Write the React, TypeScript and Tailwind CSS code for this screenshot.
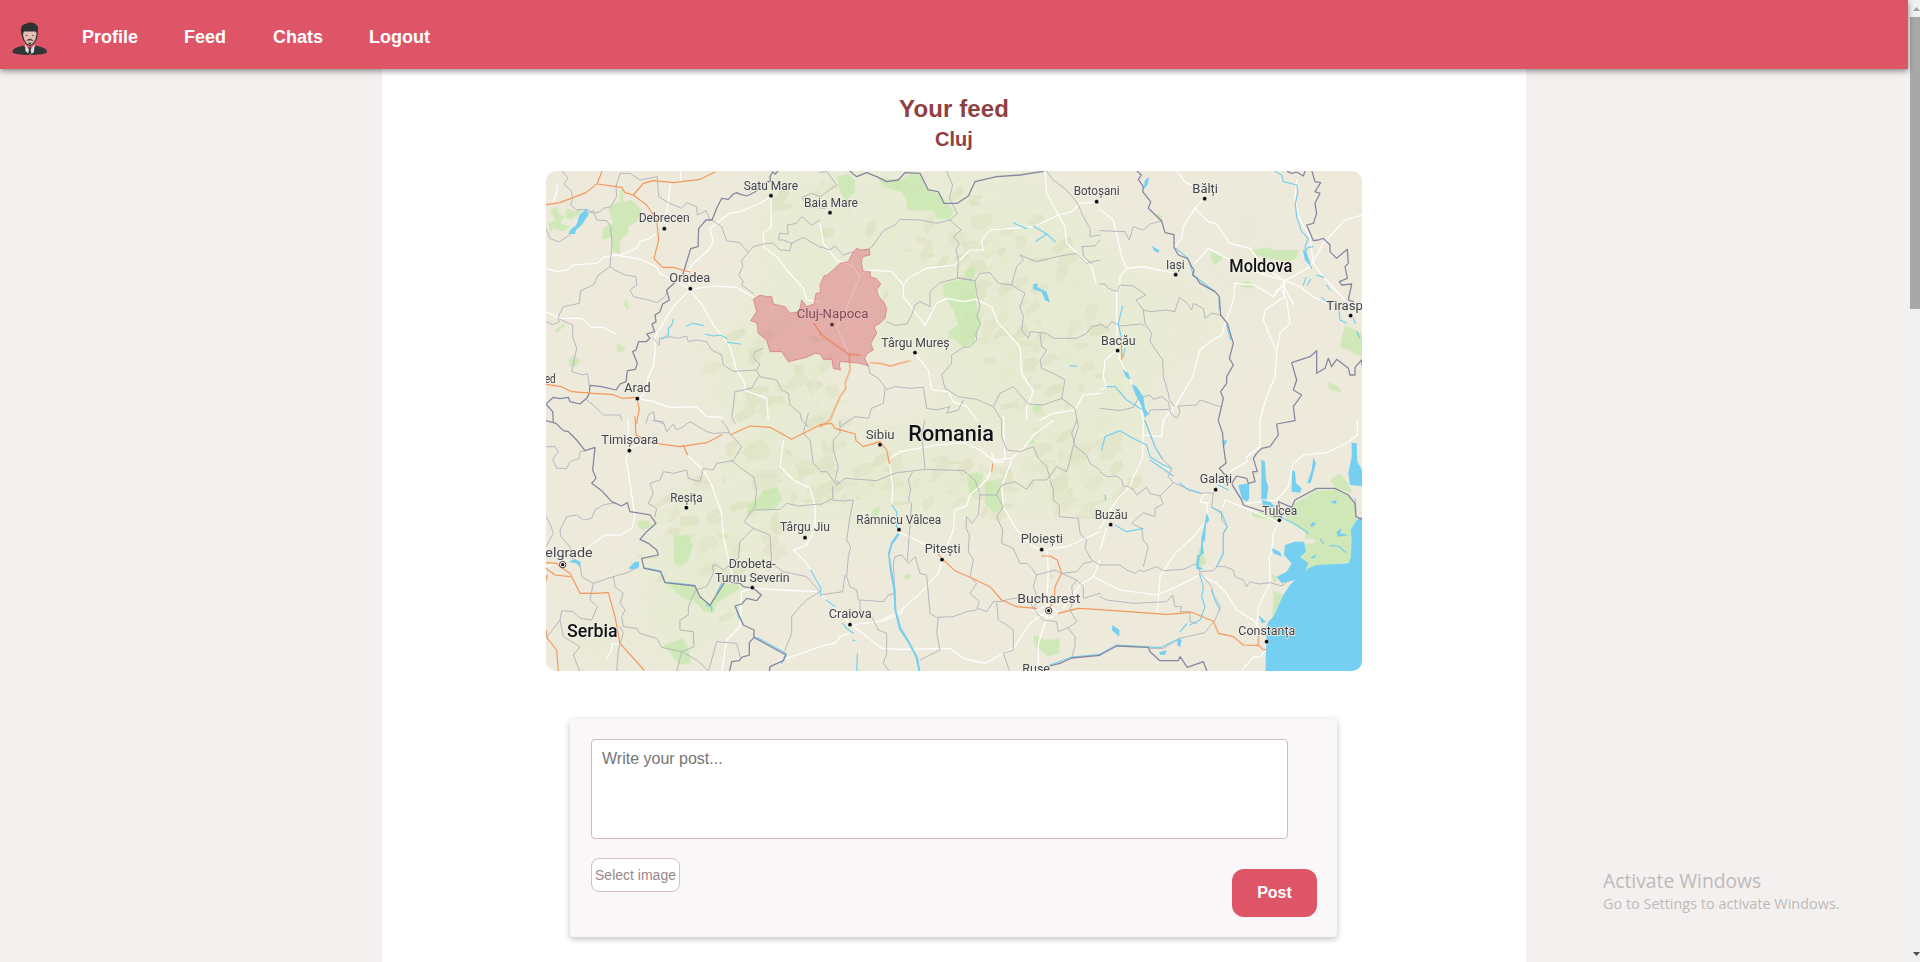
import React from "react";

type Sheet = {
  x: number;
  y: number;
  border: string[];
  county: string[];
  road: string[];
  motorway: string[];
  park: string[];
  lake: string[];
  river: string[];
};

/* Every sheet of the map is drawn at three units per pixel. */
const sheets: Sheet[] = [
  {
    x: -6,
    y: -11,
    border: [
      "714,34 706,42 698,36 690,50 692,62 668,74 645,96 620,108 604,104 590,98 580,102 565,118 545,115 530,145 516,180 498,180 476,206 474,260 452,266 428,345 404,368 380,390 388,420 368,432 360,455 345,465 348,485 336,492 344,515 320,522 330,535 318,545 296,545 288,570 278,575 292,610 286,628 262,632 258,665 240,672 228,690 185,680 150,676 148,700 140,715 120,732 90,725 85,712 60,716 40,712 18,732 38,755 40,786",
    ],
    county: [
      "68,34 84,55 72,72 94,92 98,118 92,135 110,150 140,148 160,160 180,155 190,145 212,140 230,110 228,80 240,40 270,40 300,60 352,50 356,110 385,128 425,145 440,128 470,140 472,165 498,152 510,180",
      "18,205 30,235 56,246 90,225 130,165 160,152 170,180 200,182 212,200 216,250 210,320 175,345 160,375 122,392 118,430 70,440 55,470 58,485 38,494 18,485",
      "210,320 225,330 255,345 288,350 290,375 270,390 280,410 325,420 350,428 375,410 380,398",
      "60,478 98,495 98,530 110,565 95,635 130,645 142,640 148,676",
      "516,180 545,200 560,242 600,248 625,278 605,300 608,320 596,345 610,365 605,375 640,400",
      "625,278 640,260 680,250 700,250 720,270 750,272 755,250 730,240 716,240 718,220 745,222 742,195 770,190 785,170 815,195 840,180",
      "755,250 790,232 840,262",
      "855,145 805,140 785,112 815,100 840,110",
      "340,535 358,556 358,535 390,530 415,535 440,528 445,545 470,540 500,545 515,570 545,585 550,615 580,634 650,630 660,612 645,600 640,590 645,575 670,565",
      "650,632 660,650 710,660 725,690 745,700 750,735 780,760 785,780 805,800",
      "655,650 635,685 610,690 585,695 580,740 575,770 585,790",
      "140,720 160,735 190,765 240,765 245,780",
      "318,790 325,765 340,755 345,780 370,792",
    ],
    road: [
      "52,72 50,100 38,130",
      "422,34 422,62",
      "392,68 385,120 375,190",
      "345,222 330,235 300,245 290,265 240,285 195,290 170,310 100,315 80,330 50,335 18,326",
      "220,283 300,298 350,320 360,340 440,380 450,388",
      "693,110 660,130 600,155 570,160 510,205 520,245 505,270 455,315 440,345 450,380",
      "693,110 694,200 670,220 672,262 715,295 740,330 790,385 800,420 840,425",
      "450,388 520,378 590,382 640,412",
      "450,388 400,440 345,530 345,580 340,620 325,650 318,695 300,712",
      "450,390 490,440 520,495 570,560 590,630 615,670 612,690 680,715 685,780",
      "18,455 60,475 125,475 155,502 190,502 226,521",
      "292,716 340,724 390,742 470,740 500,770 545,772",
    ],
    motorway: [
      "18,134 60,128 138,98 172,70 186,34",
      "172,72 245,82 255,98 280,105 320,135 350,180 356,240 342,295 368,322 400,322 450,336",
      "280,105 310,70 340,62 400,68 480,58 525,36",
      "18,673 65,680 95,695 160,700 220,704 245,715 290,712",
      "290,716 298,745 290,790",
      "822,490 842,520",
    ],
    park: [
      "210,135 240,125 240,90 250,90 250,125 275,120 305,150 290,185 265,200 265,215 240,245 240,282 218,275 215,230 185,240 190,205 220,190 205,150",
      "30,150 50,140 60,165 75,170 60,190 90,200 70,215 40,205 30,220 25,190 45,180",
      "80,145 105,155 125,140 120,160 90,180 76,170",
      "45,510 75,488 75,497 50,518",
      "232,550 258,565 245,580 230,572",
      "85,600 100,585 120,600 108,620 90,620",
      "250,430 262,415 262,430 270,447 258,445",
    ],
    lake: ["140,145 145,165 125,195 108,210 105,222 85,222 92,208 110,195 118,165"],
    river: [
      "400,478 395,495 385,505 385,525 365,538",
      "440,498 460,490 490,497",
      "495,522 520,528 540,525 560,535",
      "562,547 602,552",
    ],
  },
  {
    x: 274,
    y: -11,
    border: [
      "90,34 110,50 140,38 170,50 200,65 235,60 255,38 300,40 325,90 355,95 372,130 412,130 445,108 465,65 530,50 600,45 670,34",
    ],
    county: [
      "0,38 20,34 50,75 0,110",
      "380,34 398,75 388,115 412,160 390,180 424,210 400,230 418,250 408,270 415,300 412,352 455,360",
      "390,180 350,190 300,180 240,178 225,195 190,212 155,262 135,270",
      "0,260 30,270 45,258 70,285 100,275",
      "200,485 225,496 260,492 275,465 285,435 300,425 330,440 330,395 360,368 412,355 465,362 480,340 510,338 535,370 575,375 590,320 610,300 600,285 650,305 710,290 770,280 800,310 840,300",
      "465,362 470,400 480,440 470,470 482,490 468,520 470,540 450,560 430,562 395,585 395,610 365,645 375,685 415,710 470,718 520,740 540,700 580,680 625,732 670,735 725,715",
      "575,375 615,400 600,440 610,470 605,510 625,535 630,515 680,520 700,535 770,535 800,520 815,500 840,495",
      "660,520 665,560 680,570 660,600 665,625 700,640 735,660 725,715 765,745 775,800 760,850",
      "145,615 150,640 175,655 200,688 225,680 270,685 310,682 320,745 350,750 390,740 380,760 415,750 430,720",
      "680,34 700,60 740,90 765,120 775,135 790,170 810,205 810,230 840,225",
      "195,688 190,730 155,745 145,775 105,770 60,800",
      "785,260 825,258 840,240",
      "788,262 790,290 815,310",
      "520,740 545,780",
    ],
    road: [
      "0,190 10,250 50,300 100,320 120,350 90,420 50,500 85,580",
      "125,340 150,330 215,335 250,375 250,410 315,495 350,430 380,415 430,425 465,418 515,440 535,490 555,510 600,560 605,640 640,695 620,740 620,780",
      "250,375 270,350 320,325 405,315 450,270 490,270 485,240 510,210 575,205 640,200 715,165 755,155 780,130 840,125",
      "675,34 680,100 715,165 735,200 740,250 815,320 828,370",
      "285,580 325,630 335,690 385,695 400,725 440,740 470,780",
      "660,780 700,760 765,750 790,705 840,700",
    ],
    motorway: ["0,520 40,550 85,582 120,586", "88,582 90,630 75,670 78,685 60,710 30,780 0,800", "150,608 180,610 210,618 270,602"],
    park: [
      "50,50 85,42 105,60 105,95 85,115 80,140 60,90",
      "170,50 235,62 275,40 300,45 330,95 360,100 400,150 390,178 350,175 340,150 260,150 260,120 240,95 190,80",
      "370,370 412,360 465,362 470,440 482,490 460,550 430,562 400,535 385,535 385,515 415,495 400,450 370,400",
      "435,330 468,320 455,360 435,350",
      "640,735 664,735 664,758 636,750",
    ],
    lake: ["640,372 652,370 652,382 680,395 690,428 675,420 665,395 640,388"],
    river: ["580,188 605,200 620,205", "640,198 680,222 648,244", "680,222 706,245", "750,617 770,619"],
  },
  {
    x: 554,
    y: -11,
    border: [
      "112,34 124,45 115,58 130,80 128,95 152,125 145,145 185,183 195,218 222,224 222,262 235,285 262,295 275,320 282,330 278,345 290,355 300,370 345,395 358,410 362,465 382,490 400,550 388,595 400,615 380,650 380,670 362,695 370,715 355,780",
      "562,34 575,40 590,36 610,48 615,34",
      "636,34 645,65 662,68 645,95 660,100 645,130 650,160 640,190 620,195 635,230 640,242 655,240 670,235 690,255 690,275 710,295 742,268 745,310 735,320 742,355 718,365 725,375 755,372 745,420 760,425",
      "786,615 785,600 765,622 765,645 750,645 745,625 710,598 695,620 685,595 675,625 650,640 650,572 630,590 575,608 590,660 580,690 605,705 580,740 585,780",
    ],
    county: [
      "0,212 75,215 88,240 100,200 130,210 150,192 185,183",
      "0,372 15,372 25,385 50,395 60,375 100,378 138,405 108,420 130,450 150,455 200,450 225,455 238,412 262,430 275,450 280,430 310,445 315,475 335,460 362,465",
      "130,450 135,490 155,520 150,545 188,600 190,650 205,700 208,720 225,740",
      "0,490 20,505 35,485 60,498 125,492 135,500",
      "0,745 60,752 100,742 115,715 150,705 160,718 185,710 205,725 212,760 230,775 240,755 235,738 290,735 300,720 362,740",
      "145,765 150,750 205,748",
    ],
    road: [
      "0,148 40,180 55,245 65,290 80,325 60,350 60,380 50,390 50,500 52,570",
      "80,325 130,320 225,340",
      "230,34 260,70 310,85 312,115 285,145 250,200 245,235 225,260",
      "285,145 325,185 350,192 390,250 450,265 490,320 555,362",
      "285,310 325,265 390,300 480,340 555,362 630,320 670,250 735,180 786,165",
      "555,362 520,410 465,375 405,370 400,420 375,490 365,525 330,545 300,570 278,650 225,740 190,780",
      "553,365 553,410 495,450 490,480 530,575 540,520 570,490 560,420 545,390",
      "525,395 550,380 580,432",
      "530,580 525,650 500,710 480,780",
      "555,362 600,380 640,410 680,430",
      "590,60 585,120 600,180 630,230 640,310 665,345 735,420",
      "52,570 60,600 110,700 130,780",
      "50,572 15,600 10,650 20,680 0,690",
    ],
    motorway: ["64,550 66,598"],
    park: [
      "455,270 500,262 525,270 545,270 570,270 595,268 590,295 560,305 500,295 470,285",
      "330,275 365,285 370,292 345,315 335,300",
      "415,370 445,362 462,385 430,382",
      "720,560 735,495 786,520 786,590",
      "680,665 715,680 725,698 690,690",
      "165,160 185,165 185,183 170,175",
    ],
    lake: [
      "156,258 180,272 172,278 160,270",
      "135,60 148,52 142,75 130,90",
      "68,628 85,640 92,660 78,652",
      "95,672 110,680 130,710 135,745 145,760 135,775 125,740 105,700",
      "608,268 620,280 630,315 615,300",
    ],
    river: [
      "525,34 545,45 550,65 590,75 594,95 586,130 590,170 605,215 625,235 615,260 620,285 635,325",
      "640,260 625,262 612,275 625,310",
      "610,375 618,352",
      "622,375 632,358",
      "650,345 672,352",
      "680,375 690,390",
      "665,412 685,430",
      "715,430 720,480 740,490",
      "68,438 60,470 55,490 65,540",
      "75,565 70,590",
      "760,475 766,490",
      "770,515 780,535",
      "20,680 45,680 80,720 125,748",
      "228,265 265,296 280,345 345,395",
      "357,415 358,450",
      "380,495 392,540",
    ],
  },
  {
    x: -6,
    y: 249,
    border: [
      "18,2 48,10 70,32 85,35 95,45 110,60 135,92 165,82 158,150 168,175 155,190 185,212 215,245 245,258 262,248 270,275 330,285 348,310 320,335 300,358 325,370 350,390 355,405 305,415 312,445 362,455 375,488 465,498 480,530 510,556 555,485 600,490 610,500 640,505 664,525 650,542 620,535 605,552 585,558 610,615 642,630 642,652 738,705 730,722 690,740 688,756",
      "642,652 628,668 628,705 605,712 598,722 575,725 568,756",
    ],
    county: [
      "18,80 45,80 55,95 38,118 50,145 80,145 90,125 118,115 120,95 135,92",
      "225,248 190,255 165,270 155,295 130,300 110,285 80,290 60,330 62,350 90,380 90,410 120,430 125,470 160,490 220,470 262,458 295,440",
      "338,2 370,5 380,35 400,12 410,30 430,20 450,5 500,35 520,40 568,38 605,80 580,122 530,130 520,150 490,145 480,185 445,175 440,150 400,160 370,155 360,180 330,190 340,220 325,250 350,265 345,290",
      "545,2 560,20 568,38",
      "575,122 610,150 640,170 650,210 645,260 612,305 640,325 600,365 595,415 550,450 530,435 518,435 520,460 500,500 465,510",
      "645,270 720,268 740,250 775,258 840,252",
      "640,325 690,345 695,430 730,455 800,470 840,515",
      "465,515 445,560 445,585 420,600 420,630 460,635 462,680 425,695 365,682 350,655 300,640 290,625 250,620 245,590 255,570 240,550 250,520 225,500 220,470",
      "160,490 150,540 172,560 155,600 120,595 100,575 65,572 60,600 18,655",
      "60,600 70,650 120,680 100,705 120,756",
      "425,695 410,756",
      "425,695 470,720 510,756",
      "505,756 530,665 590,670 600,710",
      "18,290 30,310 40,340 18,380",
      "840,515 800,540 780,560 755,590 755,640 735,690",
      "240,620 250,640 235,690 230,756",
      "805,-20 790,40 810,60 820,130 840,150",
    ],
    road: [
      "268,95 258,115 270,190 285,290 275,325 240,345 195,345 140,385 120,410",
      "265,2 265,60",
      "350,72 292,75 270,88",
      "445,108 490,150 515,195 545,280 550,350 570,440 580,480",
      "640,505 605,515 600,620 560,660 555,690 545,756",
      "730,62 720,140 760,180 810,205 825,255 825,330 800,375 760,390 800,430 840,500",
      "640,505 760,512 830,515",
      "715,722 770,705 840,680",
      "200,715 215,690 215,672 245,672",
      "20,440 45,432 67,434",
    ],
    motorway: [
      "285,-10 288,45 330,68 420,80 500,68 545,45",
      "430,76 442,104",
      "572,44 630,18 690,22 755,58 780,45 840,15",
      "18,428 50,430 60,440 90,460 120,520 165,520 205,518 225,590 240,670 312,750",
      "18,445 45,465 90,470",
      "18,630 22,655 50,690 55,756",
      "18,482 22,465",
    ],
    park: [
      "400,345 445,345 460,375 445,420 425,436 402,430",
      "290,305 325,302 335,318 310,330 295,322",
      "620,290 625,250 650,240 665,212 715,202 725,240 700,270 650,272",
      "380,490 465,502 485,540 510,555 545,495 590,490 600,505 560,530 530,550 520,580 490,572 460,540 430,535",
      "370,675 430,655 445,690 455,730 420,735 390,700",
    ],
    lake: ["265,445 285,425 298,425 295,445 275,448", "85,425 105,418 122,425 118,440 108,430"],
    river: [
      "312,443 362,453 375,486 465,496",
      "500,555 515,560 515,572",
      "588,560 595,590 610,612",
      "545,490 530,520",
      "650,652 738,700 725,730",
      "812,450 840,500",
    ],
  },
  {
    x: 274,
    y: 249,
    border: ["690,738 720,730 755,714 840,706"],
    county: [
      "0,155 20,155 50,195 75,175 170,182 230,158 320,148 430,152 465,180 480,220 475,285 455,310 440,290 438,325 448,345 445,395 460,420 450,470 470,490 450,520 478,545 470,570 440,575 400,590 350,592 330,580 320,465 300,460 285,410 265,430 245,405 225,410 220,430 225,520 205,525 190,545 120,540 120,570",
      "38,200 38,235 0,255",
      "38,240 70,243 100,240 90,290 80,360 92,380 85,410 80,470 90,500 110,510 115,540",
      "75,465 68,515 0,525",
      "315,2 305,40 315,145",
      "278,155 265,180 272,210 265,240 275,250 262,420",
      "120,570 155,590 175,630 200,640 200,700 190,730 210,756",
      "480,225 530,225 545,195 585,185 620,208 640,180 680,180 710,140 740,155 750,120 760,75 800,105 810,130 840,150",
      "60,2 60,40 40,60 40,90 55,140 45,180 60,190",
      "545,2 545,50 560,90 600,95 640,80 655,115 680,140 690,175",
      "765,75 755,40 770,2",
      "690,180 700,210 700,240 718,255 718,290 775,295 780,340 800,360 795,385 815,420 840,435",
      "815,425 790,430 770,455 725,460 705,450 650,465 635,445 620,430 600,430 580,385 545,370 548,330 530,290 550,260 530,225",
      "650,465 640,500 655,540 640,565 660,590 670,600 710,605 715,635 750,620 770,605 750,570 760,540 755,500 770,480 725,460",
      "540,545 580,535 625,535 640,565",
      "540,545 520,545 500,575 475,565",
      "530,550 535,600 560,615 580,630 580,690 550,700 570,756",
      "355,592 350,640 360,690 300,720",
      "745,625 765,650 765,680 755,712",
      "770,480 790,500 790,535 840,520",
    ],
    road: [
      "210,115 240,95 350,75 430,68",
      "210,135 218,200 215,255",
      "430,68 480,90 520,120 575,115 610,85 640,45 700,2",
      "550,-10 555,115",
      "575,120 545,200 550,260 590,330 640,380 665,390 740,380 840,335",
      "525,125 500,180 450,225 440,258 405,270 400,330 385,370 370,410",
      "515,100 525,125 550,125",
      "235,335 300,365 360,405",
      "368,420 355,460 300,520 240,575 170,605 95,615 20,540 0,520",
      "95,615 185,685 250,688 390,685 430,715 495,730 580,685 630,610 680,575",
      "185,605 245,580 250,560",
      "0,678 45,670 60,650 85,640",
      "680,390 685,450 680,560",
      "685,580 655,670 655,740",
      "730,565 780,495 820,470 840,480",
      "820,470 840,420",
      "650,570 685,555 715,575 690,595 655,580 635,570",
    ],
    motorway: [
      "0,14 35,10 45,25 105,42 108,62 130,80 180,65 200,90 208,130",
      "519,130 515,155",
      "665,408 690,408 712,420 725,460 705,500 703,540 690,560",
      "355,402 370,420 405,452 450,472 510,500 545,540 590,560 650,565",
      "715,580 775,565 840,569",
    ],
    park: [
      "440,170 470,155 490,170 478,210 450,230",
      "495,185 530,180 545,210 545,250 555,265 520,278 495,250",
      "155,270 180,258 175,285 155,292",
      "255,462 272,462 270,478 252,475",
      "640,645 680,660 720,655 718,700 685,708 645,680",
      "622,72 640,58 648,72",
      "688,460 702,470 692,475",
      "105,235 122,228 118,240",
    ],
    lake: [
      "232,340 240,342 217,375 209,405 216,450 227,510 229,570 244,625 269,665 293,710 302,756 296,756 286,710 262,665 237,628 223,570 220,510 209,450 204,400 213,368",
    ],
    river: ["215,255 230,275 230,320 238,335", "68,610 80,625 100,640", "98,660 104,662", "112,700 110,756", "690,735 755,711 840,703", "2,500 2,525", "18,540 45,560"],
  },
  {
    x: 554,
    y: 249,
    border: [
      "355,2 368,40 370,75 378,130 358,145 375,165 395,190 400,200 425,240 430,255 490,275",
      "585,2 530,12 535,45 510,80 485,85 470,100 460,115 472,155 458,155 465,185 445,190 440,175 410,168 395,190",
      "520,288 545,290 535,245 575,262 585,240 650,205 705,205 745,225 765,250 768,290 786,298",
      "0,705 50,678 145,682 150,695 180,722 235,722 240,710 262,742 310,725 322,756",
    ],
    county: [
      "0,155 20,170 50,168 65,180 70,198 85,200 100,208 110,225 140,202 150,220 180,228 220,188 260,205 300,220 340,218",
      "180,228 190,252 165,265 165,290 130,278 95,310 125,325 130,360 145,380 130,440",
      "0,435 60,435 80,450 105,460 120,450 130,455 170,440 190,452 250,448 290,430 300,455",
      "135,2 165,80 190,120 215,145 205,170 220,188",
      "340,218 335,262 365,275 365,300 382,320 370,340 370,400 350,440 340,452 300,455",
      "300,460 335,500 340,525 362,560 345,600 315,638 240,655 190,685 150,685",
      "350,440 375,440 400,450 405,470 430,480 440,500 450,485 475,492 510,488 545,498 575,475 590,482",
      "0,530 20,540 60,545 100,550 200,545 218,525 225,560 245,560 240,575 270,575 270,605 290,610",
    ],
    road: [
      "130,2 128,115 100,170 90,200 50,240 20,290 0,325",
      "20,325 0,390",
      "190,2 185,50 135,45",
      "325,250 300,245 310,225 350,210",
      "322,255 320,300 280,350 225,400 180,470 172,575",
      "0,480 60,510 172,525 240,495 300,465 350,490 380,520 410,570 460,600 490,640",
      "370,260 375,240 430,262 520,300 535,310 520,340 515,400 508,410 510,490 475,560 470,630",
      "480,2 480,80 440,110 440,125 390,155",
      "440,250 530,240 565,200 580,130 610,105 680,98 740,70 772,45 772,2",
      "498,690 480,710 460,712 425,752",
    ],
    motorway: ["0,569 200,583 275,577 340,604 355,640 400,650 430,675 475,676 488,688 498,689", "475,645 475,676"],
    park: [
      "585,250 650,210 705,208 745,225 765,250 770,300 755,330 755,425 650,440 590,478 570,400 615,370 645,370 645,358 615,355 615,335 560,300 560,270",
      "455,275 530,285 530,305 460,290",
      "690,180 720,160 745,190 760,220 710,205",
      "300,380 320,430 295,445 288,420",
      "520,510 555,528 515,600 520,550",
      "515,460 535,475 520,490",
    ],
    lake: [
      "786,290 770,300 752,330 755,360 752,415 745,430 650,435 625,445 590,475 570,495 550,525 520,590 505,605 497,625 500,660 498,700 496,756 790,756",
      "555,375 585,365 612,365 618,395 600,410 625,430 615,455 585,480 545,490 530,470 560,455 575,430 552,405",
      "484,118 495,125 498,180 505,200 500,238 484,238",
      "415,195 447,190 448,235 440,245 425,235",
      "576,150 585,155 588,190 605,205 600,218 575,215",
      "640,112 648,130 632,190 622,188 635,150",
      "755,68 770,70 772,125 786,150 786,198 750,195 745,160 755,110",
      "485,240 510,245 525,260 490,262",
      "368,60 382,62 372,80",
      "515,385 540,395 545,410 520,400",
      "38,615 58,630 58,650 35,630",
      "232,655 245,660 240,682 232,675",
      "475,585 498,605 485,610",
      "320,278 328,300 318,312 315,360 308,370 312,400 300,408 305,350 312,320",
      "292,405 300,405 296,440 310,445 300,450 288,445",
      "178,697 200,690 195,705 180,704",
      "630,315 640,305 648,312 635,322",
      "710,335 725,325 720,340 748,345 712,350",
      "690,245 710,240 708,253",
      "630,415 648,402 645,415",
    ],
    river: [
      "5,90 15,50 60,32 90,50 140,75 150,110 190,135 215,145",
      "135,2 165,80 185,115",
      "150,120 220,168",
      "240,190 265,210 300,218",
      "355,195 385,210",
      "335,262 365,280 382,320 370,340 370,400 350,440",
      "298,460 310,500 305,530 315,560 300,600 270,615",
      "260,612 240,635",
      "335,510 345,540 360,570",
      "45,315 80,335 130,325",
      "540,290 590,315 625,340",
      "400,200 425,240",
      "765,235 768,270",
      "0,702 50,675 180,683 240,655",
      "690,377 715,378 738,398",
      "662,358 670,370",
      "15,225 17,240",
    ],
  },
];

/* [text, sheet, left, right, baseline, marker x, marker y, marker kind] */
type Label = [string, number, number, number, number, number?, number?, ("dot" | "capital")?];

const labels: Label[] = [
  ["Debrecen", 0, 296, 449, 187, 373, 206],
  ["Satu Mare", 0, 611, 774, 89, 693, 107],
  ["Baia Mare", 1, -48, 114, 140, 30, 158],
  ["Oradea", 0, 388, 511, 367, 451, 386],
  ["Cluj-Napoca", 1, -70, 145, 474, 36, 494],
  ["Târgu Mureș", 1, 184, 389, 561, 285, 578],
  ["Botoșani", 1, 761, 899, 106, 830, 125],
  ["Bălți", 2, 277, 354, 99, 314, 116],
  ["Iași", 2, 198, 254, 328, 227, 344],
  ["Tirasp", 2, 679, 789, 449, 752, 467],
  ["Bacău", 2, 3, 107, 555, 53, 572],
  ["Arad", 0, 253, 332, 697, 292, 716],
  ["ed", 0, 14, 47, 669],
  ["Timișoara", 3, 184, 355, 72, 268, 92],
  ["Reșița", 3, 391, 488, 245, 439, 263],
  ["elgrade", 3, 16, 158, 411, 68, 434, "capital"],
  ["Drobeta-", 3, 566, 707, 444],
  ["Turnu Severin", 3, 525, 749, 486, 637, 503],
  ["Târgu Jiu", 3, 720, 870, 334, 795, 353],
  ["Sibiu", 4, 137, 224, 56, 180, 74],
  ["Râmnicu Vâlcea", 4, 109, 364, 313, 237, 329],
  ["Pitești", 4, 314, 422, 399, 366, 419],
  ["Ploiești", 4, 602, 729, 370, 665, 389],
  ["Craiova", 4, 26, 155, 594, 90, 614],
  ["Bucharest", 4, 592, 781, 548, 686, 572, "capital"],
  ["Ruse", 4, 607, 690, 760],
  ["Buzău", 5, -16, 83, 296, 32, 314],
  ["Galați", 5, 299, 396, 190, 347, 209],
  ["Tulcea", 5, 487, 592, 285, 538, 301],
  ["Constanța", 5, 415, 586, 645, 500, 665],
];

const countries: Label[] = [
  ["Moldova", 2, 388, 577, 337],
  ["Romania", 4, 265, 522, 62],
  ["Serbia", 3, 81, 233, 650],
];

const clujCounty =
  "632,482 650,455 640,418 660,405 680,410 695,410 700,432 735,440 750,460 778,455 785,420 800,440 822,432 828,400 842,398 840,375 852,348 862,345 885,325 900,310 925,305 940,275 952,264 960,270 988,268 990,285 968,290 964,310 970,335 990,335 992,352 1008,355 1022,372 1010,390 1016,410 1030,425 1040,445 1035,475 1020,490 1002,500 1010,520 992,550 1000,570 980,582 974,595 985,618 960,610 900,604 898,618 902,630 880,625 876,598 850,598 840,582 825,580 800,592 745,605 725,575 690,575 680,540 655,520 650,488";

/* Relief zones: centre, radii, number of facets */
const relief: [number, number, number, number, number][] = [
  [330, 45, 110, 40, 34],
  [430, 70, 90, 45, 26],
  [480, 130, 70, 60, 36],
  [520, 230, 60, 90, 50],
  [400, 110, 70, 60, 24],
  [220, 195, 70, 50, 36],
  [245, 250, 60, 40, 28],
  [340, 312, 130, 26, 120],
  [210, 330, 60, 60, 50],
  [540, 305, 50, 50, 45],
  [440, 325, 50, 22, 30],
  [150, 400, 50, 60, 26],
  [150, 350, 50, 45, 20],
  [440, 200, 50, 55, 18],
];

function facets(): [string, string][] {
  let seed = 71;
  const next = () => {
    seed = (seed * 16807) % 2147483647;
    return seed / 2147483647;
  };
  const tints = ["#d9dbb9", "#dfe2c4", "#e1ebc9", "#dcdfbe", "#ebebda", "#e3ebcc"];
  const out: [string, string][] = [];
  for (const [cx, cy, rx, ry, count] of relief) {
    for (let i = 0; i < count; i++) {
      const angle = next() * Math.PI * 2;
      const reach = Math.sqrt(next());
      const x = cx + Math.cos(angle) * rx * reach;
      const y = cy + Math.sin(angle) * ry * reach;
      const w = 3 + next() * 9;
      const h = 2 + next() * 6;
      const s = next() * 7 - 2;
      const k = next() * w;
      out.push([
        `${x - w},${y + s} ${x - k},${y - h} ${x + w * 0.7},${y - h - s} ${x + w},${y - s * 0.5} ${x + k * 0.4},${y + h * 0.7} ${x - w * 0.5},${y + h + s * 0.5}`,
        tints[Math.floor(next() * tints.length)],
      ]);
    }
  }
  return out;
}

const terrain = facets();

function Layer({ name, area, className }: { name: "border" | "county" | "road" | "motorway" | "park" | "lake" | "river"; area?: boolean; className: string }) {
  return (
    <g className={className} strokeLinejoin="round" strokeLinecap="round">
      {sheets.map((s, i) => (
        <g key={i} transform={`translate(${s.x} ${s.y}) scale(0.33333)`}>
          {s[name].map((p, j) => (area ? <polygon key={j} points={p} /> : <polyline key={j} points={p} />))}
        </g>
      ))}
    </g>
  );
}

function MapText({ items, country }: { items: Label[]; country?: boolean }) {
  return (
    <>
      {items.map(([text, sheet, left, right, base, mx, my, kind]) => (
        <g key={text} transform={`translate(${sheets[sheet].x} ${sheets[sheet].y}) scale(0.33333)`}>
          {mx !== undefined && kind !== "capital" && <circle cx={mx} cy={my} r="6.5" fill="#000" stroke="#fff" strokeWidth="1.5" />}
          {mx !== undefined && kind === "capital" && (
            <>
              <circle cx={mx} cy={my} r="9.5" fill="#fff" stroke="#222" strokeWidth="2.5" />
              <circle cx={mx} cy={my} r="5" fill="#111" />
            </>
          )}
          <text
            x={left}
            y={base}
            textLength={right - left}
            lengthAdjust="spacingAndGlyphs"
            fontSize={country ? (text === "Romania" ? 65 : 53) : 39}
            className={
              country
                ? "fill-[#111116] stroke-[#f3f2e8] stroke-[5px] font-medium [paint-order:stroke]"
                : "fill-[#43444c] stroke-[#f1f0e6] stroke-[5px] font-normal [paint-order:stroke]"
            }
          >
            {text}
          </text>
        </g>
      ))}
    </>
  );
}

function CountyMap() {
  return (
    <svg viewBox="0 0 816 500" className="mt-[19px] block h-[500px] w-[816px] shrink-0 rounded-[10px] font-['Roboto',sans-serif]">
      <defs>
        <filter id="soft" x="-30%" y="-30%" width="160%" height="160%">
          <feGaussianBlur stdDeviation="14" />
        </filter>
      </defs>
      <rect width="816" height="500" fill="#edeadc" />
      <g filter="url(#soft)" fill="#e8ebd4">
        <polygon points="215,0 480,0 560,60 620,150 600,260 590,330 520,350 430,350 330,360 230,360 200,460 110,500 90,420 120,330 190,280 150,190 210,120" />
        <ellipse cx="630" cy="150" rx="50" ry="60" opacity="0.6" />
        <ellipse cx="700" cy="80" rx="30" ry="70" opacity="0.25" />
        <ellipse cx="50" cy="470" rx="35" ry="30" opacity="0.8" />
      </g>
      <g fill="#efeadf" filter="url(#soft)" opacity="0.8">
        <ellipse cx="340" cy="215" rx="55" ry="35" />
        <ellipse cx="455" cy="290" rx="26" ry="16" />
      </g>
      <g opacity="0.5">
        {terrain.map(([points, fill], i) => (
          <polygon key={i} points={points} fill={fill} />
        ))}
      </g>
      <Layer name="park" area className="fill-[#c8e8b0] stroke-none opacity-80" />
      <Layer name="road" className="fill-none stroke-white stroke-[3.5px]" />
      <Layer name="county" className="fill-none stroke-[#b3b3bb] stroke-[2.8px]" />
      <Layer name="river" className="fill-none stroke-[#75cff0] stroke-[3.5px]" />
      <Layer name="lake" area className="fill-[#75cff0] stroke-none" />
      <Layer name="border" className="fill-none stroke-[#85869f] stroke-[3.8px]" />
      <Layer name="motorway" className="fill-none stroke-[#f7965a] stroke-[3.5px]" />
      <MapText items={labels} />
      <MapText items={countries} country />
      <g transform="translate(-6 -11) scale(0.33333)">
        <polygon points={clujCounty} fill="#dc5a68" fillOpacity="0.42" stroke="#d9727c" strokeOpacity="0.7" strokeWidth="3" />
      </g>
    </svg>
  );
}

function Avatar() {
  return (
    <svg viewBox="0 0 36 34" className="mt-2 ml-3 h-[34px] w-9">
      <path d="M0.5 30 C0.5 26 5 25.500 11 23.500 L18 29 L24.500 23.500 C30 25.500 35 26 35 30 C35 32 26 33 18 33 C9 33 0.500 32 0.500 30Z" fill="#333536" />
      <path d="M13 22 L17.800 29 L22.500 22 L22 30 L18 33 L13.500 29Z" fill="#d5e3e3" />
      <path d="M16.200 25.500 h3 l-.6 2 1 5 h-3.600 l1 -5Z" fill="#353738" />
      <path d="M10.500 9 h14.500 v6 l-2 5 -3 3.500 h-4.500 l-3 -3.500 -2 -5Z" fill="#e5bfb4" />
      <path d="M10 11 L11.500 17.500 L14.500 22 L17.800 23.500 L21 22 L24 17.500 L25.500 11" fill="none" stroke="#3a3838" strokeWidth="1.300" />
      <path d="M14.800 18.800 C15.500 16.500 20.200 16.500 20.900 18.800 L17.900 17.900Z" fill="#4a4242" stroke="#5a4c4a" strokeWidth="0.600" />
      <path d="M16.300 20.500 h3 l-.6 2 h-1.800Z" fill="#4a4242" />
      <path d="M9.500 12 C8 6 9.500 2 14 2 C17 -0.500 23 0.500 24.500 3 C27 5 26 9 25.300 12 L23.500 9.500 H12 L10.300 14Z" fill="#2f3132" />
      <path d="M14 13.500h1.300M20.300 13.500h1.300" stroke="#3a3030" strokeWidth="1" />
    </svg>
  );
}

export default function App() {
  return (
    <div className="flex h-[962px] w-[1920px] overflow-hidden bg-[#f4f0ef] font-['Liberation_Sans',Arial,sans-serif]">
      <div className="relative flex w-[1908px] flex-col">
        <header className="z-10 flex h-[69px] shrink-0 items-center bg-[#df5568] shadow-[0_2px_6px_rgba(0,0,0,0.45)]">
          <Avatar />
          <nav className="ml-[34px] flex gap-[46px] pt-1.5 text-[18px] font-bold text-white">
            <a>Profile</a>
            <a>Feed</a>
            <a className="ml-px">Chats</a>
            <a>Logout</a>
          </nav>
        </header>
        <main className="mx-auto flex w-[1144px] grow flex-col items-center bg-white pt-[26px]">
          <h1 className="text-2xl leading-7 font-bold tracking-[0.1px] text-[#914042]">Your feed</h1>
          <h2 className="mt-[3px] text-xl leading-[26px] font-bold text-[#914042]">Cluj</h2>
          <CountyMap />
          <section className="mt-12 mr-px flex h-[218px] w-[767px] shrink-0 flex-col rounded bg-[#f9f7f8] pt-5 pr-5 pl-[21px] shadow-[0_2px_6px_rgba(0,0,0,0.25)]">
            <textarea
              placeholder="Write your post..."
              className="block h-[100px] w-[697px] shrink-0 resize-none rounded border border-[#cfbcbc] bg-white px-2.5 py-2.5 text-base leading-[18px] placeholder:text-[#757575]"
            />
            <div className="mt-[19px] flex items-start justify-between">
              <button className="h-[34px] w-[89px] rounded-lg border border-[#d3bfbf] bg-white text-[14px] whitespace-nowrap text-[#978888]">Select image</button>
              <button className="mt-[11px] h-12 w-[85px] rounded-xl bg-[#df5568] text-base font-bold text-white">Post</button>
            </div>
          </section>
        </main>
        <div className="absolute top-[869px] left-[1603px] font-['Open_Sans','Noto_Sans',sans-serif] whitespace-nowrap text-[#bdbaba]">
          <p className="text-[19.3px] leading-6">Activate Windows</p>
          <p className="mt-px text-[14.45px] leading-5">Go to Settings to activate Windows.</p>
        </div>
      </div>
      <div className="flex w-3 flex-col overflow-hidden bg-[#f1f1f1] pl-0.5">
        <svg viewBox="0 0 10 17" className="h-[17px] w-2.5 shrink-0">
          <path d="M3 11 L6.500 7 L10 11Z" fill="#a3a3a3" />
        </svg>
        <div className="h-[292px] w-[13px] shrink-0 bg-[#a8a8a8]" />
        <svg viewBox="0 0 10 17" className="mt-auto h-[17px] w-2.5 shrink-0">
          <path d="M3 7 L10 7 L6.500 11Z" fill="#505050" />
        </svg>
      </div>
    </div>
  );
}
